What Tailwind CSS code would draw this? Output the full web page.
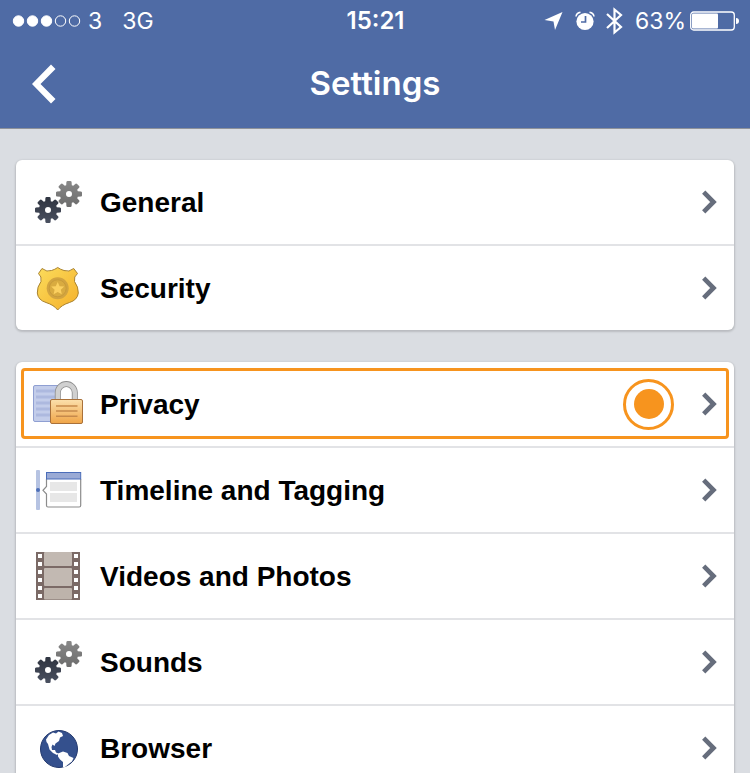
<!DOCTYPE html>
<html lang="en">
<head>
  <meta charset="UTF-8" />
  <meta name="viewport" content="width=device-width, initial-scale=1.0" />
  <title>Settings</title>
  <script src="https://cdn.jsdelivr.net/npm/@tailwindcss/browser@4"></script>
</head>
<body class="h-screen overflow-hidden bg-[#dadde2] font-['Liberation_Sans',Arial,sans-serif]">

  <!-- Shared shapes -->
  <svg class="absolute size-0" aria-hidden="true">
    <defs>
      <linearGradient id="darkGear" x1="0" y1="0" x2="0" y2="1">
        <stop offset="0" stop-color="#2f3440" /><stop offset="1" stop-color="#4a5060" />
      </linearGradient>
      <linearGradient id="grayGear" x1="0" y1="0" x2="0" y2="1">
        <stop offset="0" stop-color="#888" /><stop offset="1" stop-color="#6c6c6c" />
      </linearGradient>
      <linearGradient id="gold" x1="0" y1="0" x2="1" y2="1">
        <stop offset="0" stop-color="#fbdc5c" /><stop offset="1" stop-color="#f5b02a" />
      </linearGradient>
      <linearGradient id="lockBody" x1="0" y1="0" x2="0" y2="1">
        <stop offset="0" stop-color="#fbe0ac" /><stop offset="1" stop-color="#f0a548" />
      </linearGradient>
      <symbol id="gear" viewBox="-13 -13 26 26">
        <path fill-rule="evenodd" d="M-2.6-12 Q-2.4-13 -1.4-13 H1.4 Q2.4-13 2.6-12 L2.8-8.8 L4.2-8.2 L6.6-10.3 Q7.3-10.8 8.1-10.1 L10.1-8.1 Q10.8-7.3 10.3-6.6 L8.2-4.2 L8.8-2.8 L12-2.6 Q13-2.4 13-1.4 V1.4 Q13 2.4 12 2.6 L8.8 2.8 L8.2 4.2 L10.3 6.6 Q10.8 7.3 10.1 8.1 L8.1 10.1 Q7.3 10.8 6.6 10.3 L4.2 8.2 L2.8 8.8 L2.6 12 Q2.4 13 1.4 13 H-1.4 Q-2.4 13 -2.6 12 L-2.8 8.8 L-4.2 8.2 L-6.6 10.3 Q-7.3 10.8 -8.1 10.1 L-10.1 8.1 Q-10.8 7.3 -10.3 6.6 L-8.2 4.2 L-8.8 2.8 L-12 2.6 Q-13 2.4 -13 1.4 V-1.4 Q-13-2.4 -12-2.6 L-8.8-2.8 L-8.2-4.2 L-10.3-6.6 Q-10.8-7.3 -10.1-8.1 L-8.1-10.1 Q-7.3-10.8 -6.6-10.3 L-4.2-8.2 L-2.8-8.8 Z M3 0 A3 3 0 1 0 -3 0 A3 3 0 1 0 3 0 Z" />
      </symbol>
      <symbol id="gears" viewBox="0 0 52 52">
        <use href="#gear" x="24" y="5" width="26" height="26" fill="url(#grayGear)" />
        <use href="#gear" x="3" y="21" width="26" height="26" fill="url(#darkGear)" />
      </symbol>
      <symbol id="chevron" viewBox="0 0 16 24">
        <path d="M1.7 2.2 L11.5 12 L1.7 21.8" fill="none" stroke="#666d7c" stroke-width="4.6" />
      </symbol>
    </defs>
  </svg>

  <header class="border-b border-[#8e929a] bg-[#4f6ba5] text-white">
    <!-- Status bar -->
    <div class="grid h-10 grid-cols-[1fr_auto_1fr] items-center pt-0.5 pr-[11px] pl-3 font-[Inter,sans-serif] text-[23px]">
      <div class="flex items-center">
        <svg class="h-3 w-[70px]" viewBox="0 0 70 12" fill="#fff" stroke="#fff" role="img" aria-label="Signal strength">
          <circle cx="6.5" cy="6" r="5.2" /><circle cx="20.5" cy="6" r="5.2" /><circle cx="34.5" cy="6" r="5.2" />
          <circle cx="48.5" cy="6" r="5.2" fill="none" /><circle cx="62.5" cy="6" r="5.2" fill="none" />
        </svg>
        <span class="ml-1.5">3</span>
        <span class="ml-5">3G</span>
      </div>
      <time class="text-2xl leading-8 font-semibold">15:21</time>
      <div class="flex items-center justify-end">
        <svg class="h-5 w-[19px]" viewBox="0 0 19 20" fill="#fff" role="img" aria-label="Location">
          <path d="M18.500 1 L11 19 L9.500 10.500 L.5 9 Z" />
        </svg>
        <svg class="ml-3 size-5" viewBox="0 0 20 20" role="img" aria-label="Alarm">
          <circle cx="10" cy="10.500" r="8.600" fill="#fff" />
          <path d="M1 5.500 Q1.500 2 5.500 1.300 M19 5.500 Q18.500 2 14.500 1.300" fill="none" stroke="#fff" stroke-width="1.600" />
          <path d="M10.500 5 V11 H6" fill="none" stroke="#4f6ba5" stroke-width="1.700" />
        </svg>
        <svg class="ml-2.5 h-7 w-[18px]" viewBox="0 0 18 28" fill="none" stroke="#fff" stroke-width="2.200" role="img" aria-label="Bluetooth">
          <path d="M2 7 L16 20 L9.500 25.500 V2.500 L16 8 L2 21" />
        </svg>
        <span class="ml-3">63%</span>
        <svg class="ml-1 h-5 w-[49px]" viewBox="0 0 49 20" fill="#fff" role="img" aria-label="Battery">
          <rect x=".7" y="1" width="43.600" height="18" rx="3" fill="none" stroke="#fff" stroke-width="1.300" />
          <rect x="2" y="2.500" width="26" height="15" rx="1" />
          <path d="M46 7 Q49 7 49 10 Q49 13 46 13 Z" />
        </svg>
      </div>
    </div>

    <!-- Title bar -->
    <div class="relative flex h-22 items-center justify-center">
      <button type="button" aria-label="Back" class="absolute left-8 cursor-pointer">
        <svg class="h-10 w-6" viewBox="0 0 24 40" fill="#fff"><path d="M19 .5 L23.500 5 L8.500 20 L23.500 35 L19 39.500 L0 20 Z" /></svg>
      </button>
      <h1 class="font-[Inter,sans-serif] text-[33px] font-semibold">Settings</h1>
    </div>
  </header>

  <main class="flex flex-col gap-8 px-4 py-[31px] text-[28px] font-bold text-black">

    <nav aria-label="Account" class="divide-y-2 divide-[#e2e3e6] rounded-md bg-white shadow-[0_1px_2px_1px_#00000026]">
      <a href="#general" class="flex items-center gap-4 px-4 py-4">
        <svg class="size-[52px]"><use href="#gears" /></svg>
        <span class="flex-1 pt-0.5">General</span>
        <svg class="h-6 w-4"><use href="#chevron" /></svg>
      </a>
      <a href="#security" class="flex items-center gap-4 px-4 py-4">
        <svg class="size-[52px]" viewBox="0 0 52 52">
          <path d="M10 6.500 Q15 10.500 19.500 8.500 Q23 7.500 25.700 5.500 Q28.500 7.500 32 8.500 Q37 10.500 41.700 6.500 L45.500 11.500 Q41.500 14.500 42.500 19.500 Q46.500 25 46.300 31 Q45.500 38 37.500 40.500 Q29.500 43 25.700 48 Q22 43 14 40.500 Q6 38 5.300 31 Q5 25 9 19.500 Q10 14.500 6.500 11.500 Z" fill="url(#gold)" stroke="#a98330" stroke-width="1" />
          <circle cx="25.700" cy="26.300" r="11" fill="#d2a440" />
          <circle cx="25.700" cy="26.300" r="8.500" fill="#d9ab40" stroke="#bd9238" stroke-width=".6" />
          <path d="M25.700 20 L27.600 24.200 L32.200 24.600 L28.800 27.700 L29.800 32.200 L25.700 29.900 L21.600 32.200 L22.600 27.700 L19.200 24.600 L23.800 24.200 Z" fill="#fbd060" />
        </svg>
        <span class="flex-1 pt-0.5">Security</span>
        <svg class="h-6 w-4"><use href="#chevron" /></svg>
      </a>
    </nav>

    <nav aria-label="Preferences" class="divide-y-2 divide-[#e2e3e6] rounded-md bg-white shadow-[0_1px_2px_1px_#00000026]">
      <a href="#privacy" class="relative flex items-center gap-4 px-4 py-4">
        <svg class="size-[52px]" viewBox="0 0 52 52">
          <rect x="1.500" y="7.500" width="30" height="36" rx="1.500" fill="#c3cdea" stroke="#8f9fd2" />
          <path d="M4 13 H25 M4 19 H25 M4 25 H18 M4 31 H18 M4 37 H18" stroke="#adb9df" stroke-width="3" />
          <path d="M25.800 22 V14.600 A8.500 8.500 0 0 1 42.800 14.600 V22" fill="#fff" stroke="#8c8c8c" stroke-width="6" />
          <path d="M25.800 22 V14.600 A8.500 8.500 0 0 1 42.800 14.600 V22" fill="none" stroke="#d0d0d0" stroke-width="4.400" />
          <rect x="18.500" y="21.500" width="32" height="24" rx="1.500" fill="url(#lockBody)" stroke="#a9713a" />
          <path d="M24 28 H45.500 M24 33 H45.500 M24 38.300 H45.500" stroke="#c68a4c" stroke-width="1.600" />
        </svg>
        <span class="flex-1 pt-0.5">Privacy</span>
        <span class="mr-3 flex size-[51px] items-center justify-center rounded-full border-3 border-[#f7941e]">
          <span class="size-[30px] rounded-full bg-[#f7941e]"></span>
        </span>
        <svg class="h-6 w-4"><use href="#chevron" /></svg>
        <span class="absolute inset-x-[5px] top-1.5 bottom-[7px] rounded-[4px] border-3 border-[#f7941e]"></span>
      </a>
      <a href="#timeline" class="flex items-center gap-4 px-4 py-4">
        <svg class="size-[52px]" viewBox="0 0 52 52">
          <rect x="4" y="6" width="4" height="40" rx="1" fill="#b6c3e2" />
          <circle cx="6" cy="26" r="2" fill="#4d6fb8" />
          <path d="M14.500 15 V22.500 L11 26.300 L14.500 30 V41.500 Q14.500 43 16 43 H47.200 Q48.700 43 48.700 41.500 V15" fill="#fff" stroke="#8c8c8c" stroke-width="1.200" />
          <rect x="14.500" y="8.500" width="34.200" height="6.500" fill="#9aaad5" stroke="#4b6db9" />
          <rect x="18" y="18" width="27" height="9" fill="#e7e7e7" />
          <rect x="18" y="29" width="27" height="9" fill="#e7e7e7" />
        </svg>
        <span class="flex-1 pt-0.5">Timeline and Tagging</span>
        <svg class="h-6 w-4"><use href="#chevron" /></svg>
      </a>
      <a href="#videos" class="flex items-center gap-4 px-4 py-4">
        <svg class="size-[52px]" viewBox="0 0 52 52">
          <rect x="4" y="2" width="44" height="48" fill="#7b6a66" />
          <rect x="12" y="2" width="28" height="14" rx="1" fill="#c2b9b2" />
          <rect x="12" y="18" width="28" height="18" rx="1" fill="#c2b9b2" />
          <rect x="12" y="38" width="28" height="11.500" rx="1" fill="#bdb3ab" />
          <path d="M8 4 V50 M44 4 V50" stroke="#fff" stroke-width="4" stroke-dasharray="4 4" />
        </svg>
        <span class="flex-1 pt-0.5">Videos and Photos</span>
        <svg class="h-6 w-4"><use href="#chevron" /></svg>
      </a>
      <a href="#sounds" class="flex items-center gap-4 px-4 py-4">
        <svg class="size-[52px]"><use href="#gears" /></svg>
        <span class="flex-1 pt-0.5">Sounds</span>
        <svg class="h-6 w-4"><use href="#chevron" /></svg>
      </a>
      <a href="#browser" class="flex items-center gap-4 px-4 py-4">
        <svg class="size-[52px]" viewBox="0 0 52 52">
          <circle cx="27" cy="27" r="18.500" fill="#34508d" stroke="#22386d" />
          <path d="M14 17.500 L17 13 L21 10.500 L24 11.500 L26.500 9.500 L30 11 L31 14 L28 15.500 L27 19 L23.500 21.500 L22.500 24 L20.500 22.500 L19.500 25 L20 28 L23 28 L24 30.500 L26.500 31.500 L25 33 L21 31 L17.500 27.500 L16 22 L14.500 20 Z" fill="#fff" />
          <path d="M26 31.500 L31 29.500 L35.500 31 L37 34 L41.500 36 L40 39.500 L36 42.500 L33 45 L31 45.500 L31 40 L28 37.500 L26 34.500 Z" fill="#fff" />
        </svg>
        <span class="flex-1 pt-0.5">Browser</span>
        <svg class="h-6 w-4"><use href="#chevron" /></svg>
      </a>
    </nav>

  </main>

</body>
</html>
